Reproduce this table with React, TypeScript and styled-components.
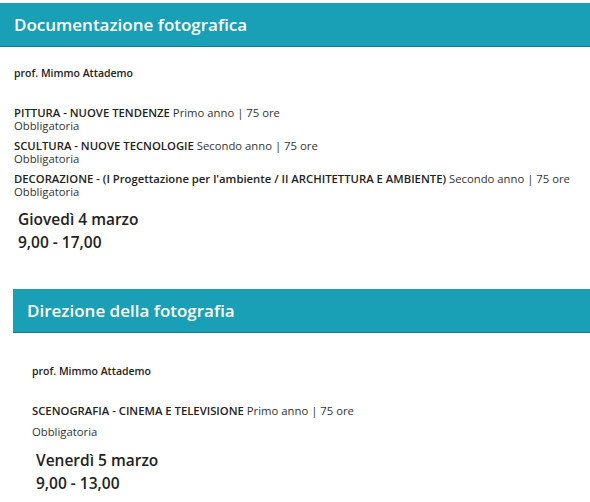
import React from 'react';
import styled, {createGlobalStyle} from 'styled-components';

type Course = {name:string, year:string, hours:string, kind:string};
type Lesson = {title:string, teacher:string, courses:Course[], day:string, time:string, inset:boolean};

const lessons:Lesson[] = [
    {
        title:'Documentazione fotografica',
        teacher:'prof. Mimmo Attademo',
        courses:[
            {name:'PITTURA - NUOVE TENDENZE', year:'Primo anno', hours:'75 ore', kind:'Obbligatoria'},
            {name:'SCULTURA - NUOVE TECNOLOGIE', year:'Secondo anno', hours:'75 ore', kind:'Obbligatoria'},
            {name:"DECORAZIONE - (I Progettazione per l'ambiente / II ARCHITETTURA E AMBIENTE)", year:'Secondo anno', hours:'75 ore', kind:'Obbligatoria'},
        ],
        day:'Giovedì 4 marzo',
        time:'9,00 - 17,00',
        inset:false,
    },
    {
        title:'Direzione della fotografia',
        teacher:'prof. Mimmo Attademo',
        courses:[
            {name:'SCENOGRAFIA - CINEMA E TELEVISIONE', year:'Primo anno', hours:'75 ore', kind:'Obbligatoria'},
        ],
        day:'Venerdì 5 marzo',
        time:'9,00 - 13,00',
        inset:true,
    },
];

const App = () => {
    return (
        <>
            <GlobalStyle/>
            <Page>
                {lessons.map(lesson=>(
                    <Section key={lesson.title} $inset={lesson.inset}>
                        <Header>{lesson.title}</Header>
                        <Body $inset={lesson.inset}>
                            <Teacher>{lesson.teacher}</Teacher>
                            <Courses>
                                {lesson.courses.map(course=>(
                                    <CourseItem key={course.name} $inset={lesson.inset}>
                                        <div><b>{course.name}</b> {course.year} | {course.hours}</div>
                                        <div>{course.kind}</div>
                                    </CourseItem>
                                ))}
                            </Courses>
                            <When>
                                <div>{lesson.day}</div>
                                <div>{lesson.time}</div>
                            </When>
                        </Body>
                    </Section>
                ))}
            </Page>
        </>
    );
};

export default App;


const GlobalStyle = createGlobalStyle`
body{
    margin: 0;
    background: #fff;
    font-family: "Open Sans", "Noto Sans", sans-serif;
    color: #222;
}
`

const Page = styled.div`
display: flex;
flex-direction: column;
padding-top: 3px;
`

const Section = styled.section<{$inset:boolean}>`
display: flex;
flex-direction: column;
margin-left: ${p=>p.$inset ? '13px' : '0'};
margin-top: ${p=>p.$inset ? '35px' : '0'};
`

const Header = styled.div`
display: flex;
align-items: center;
height: 43px;
padding-left: 14px;
background-color: #19a0b6;
border-bottom: 1px solid #17788a;
color: #fff;
font-size: 17px;
font-weight: 600;
`

const Body = styled.div<{$inset:boolean}>`
display: flex;
flex-direction: column;
padding-left: ${p=>p.$inset ? '19px' : '14px'};
padding-top: ${p=>p.$inset ? '31px' : '19px'};
font-size: 11.3px;
`

const Teacher = styled.div`
font-weight: 600;
font-size: 10.5px;
line-height: 14px;
`

const Courses = styled.div`
display: flex;
flex-direction: column;
gap: 8px;
margin-top: 27px;
`

const CourseItem = styled.div<{$inset:boolean}>`
display: flex;
flex-direction: column;
gap: ${p=>p.$inset ? '8.5px' : '0'};
line-height: 12.5px;
color: #333;

b{
    font-weight: 600;
    color: #222;
}
`

const When = styled.div`
display: flex;
flex-direction: column;
margin-top: 10px;
padding-left: 4px;
font-size: 15.5px;
font-weight: 600;
line-height: 23px;
color: #222;
`
